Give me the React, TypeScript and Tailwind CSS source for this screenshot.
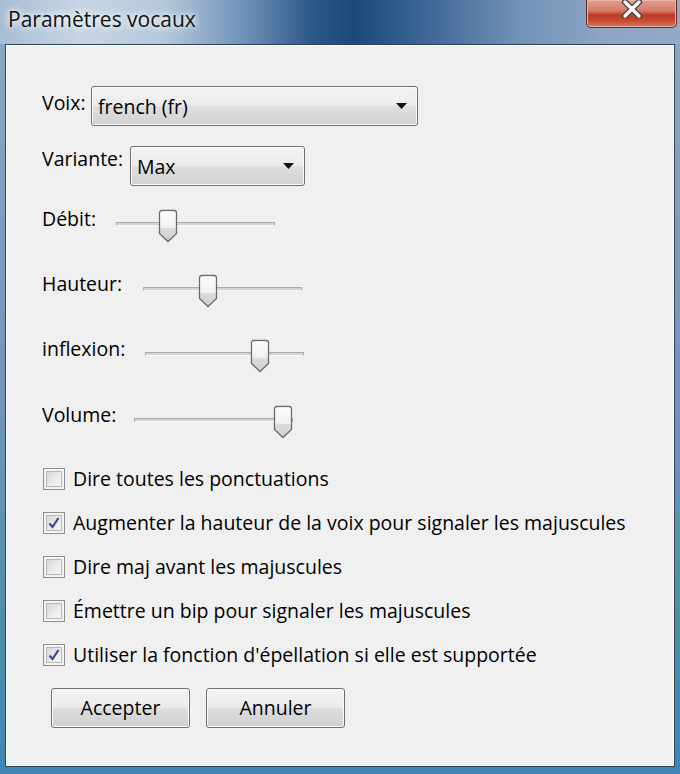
import React from "react";

const font = { fontFamily: '"Open Sans", "Noto Sans", sans-serif' };

function Combo({ value, width }: { value: string; width: string }) {
  return (
    <div
      className={`${width} h-[40px] rounded-[3px] border border-[#707070] bg-[linear-gradient(180deg,#f3f3f3_0%,#ececec_48%,#dedede_52%,#d2d2d2_100%)] shadow-[inset_0_0_0_1px_#fbfbfb] flex items-center justify-between pl-[6px] pr-[10px]`}
    >
      <span className="text-[19.5px] leading-[26px] text-black mt-[2px]">{value}</span>
      <svg width="11" height="6" viewBox="0 0 11 6">
        <path d="M0 0H11L5.5 6Z" fill="#111" />
      </svg>
    </div>
  );
}

function SliderRow({ label, labelWidth, offset }: { label: string; labelWidth: string; offset: number }) {
  return (
    <div className="flex items-start h-[33px]">
      <span className={`${labelWidth} text-[19.5px] leading-[26px] mt-[-3px]`}>{label}</span>
      <div className="relative w-[159px] h-[33px]">
        <div className="absolute left-0 right-0 top-[13px] h-[4px] rounded-[1px] border border-[#a9a9a9] border-b-[#f8f8f8] bg-[#d3d6d6]" />
        <svg className="absolute top-0" style={{ left: offset }} width="20" height="34" viewBox="0 0 20 34">
          <defs>
            <linearGradient id={`g-${label}`} x1="0" y1="0" x2="0" y2="1">
              <stop offset="0" stopColor="#fdfdfd" />
              <stop offset="0.55" stopColor="#f1f1f1" />
              <stop offset="0.58" stopColor="#dcdcdc" />
              <stop offset="1" stopColor="#cfcfcf" />
            </linearGradient>
          </defs>
          <path
            d="M1.5 4Q1.5 1.5 4 1.5H16Q18.5 1.5 18.5 4V24.5L10 32.5L1.5 24.5Z"
            fill={`url(#g-${label})`}
            stroke="#6c6c6c"
            strokeWidth="1.3"
          />
          <path d="M3 4.5Q3 3 4.5 3H15.5Q17 3 17 4.5" fill="none" stroke="#fff" strokeWidth="1" />
        </svg>
      </div>
    </div>
  );
}

function Check({ label, checked }: { label: string; checked?: boolean }) {
  return (
    <div className="flex items-center h-[26px]">
      <div className="ml-[1px] w-[22px] h-[22px] border border-[#8e8f8f] bg-[#f4f4f4] p-[2px]">
        <div className="w-full h-full border border-[#b9b9b9] bg-[linear-gradient(135deg,#d6d6d6_0%,#ececec_60%,#f8f8f8_100%)] flex items-center justify-center">
          {checked && (
            <svg width="12" height="12" viewBox="0 0 12 12">
              <path d="M1.5 6.5L4.5 10L10.5 1" fill="none" stroke="#34499a" strokeWidth="2.2" />
            </svg>
          )}
        </div>
      </div>
      <span className="ml-[8px] text-[19.5px] leading-[26px]">{label}</span>
    </div>
  );
}

function WinButton({ label }: { label: string }) {
  return (
    <button
      type="button"
      className="w-[139px] h-[40px] rounded-[3px] border border-[#707070] bg-[linear-gradient(180deg,#f3f3f3_0%,#ebebeb_48%,#dddddd_52%,#cfcfcf_100%)] shadow-[inset_0_0_0_1px_#fafafa] text-[19.5px] leading-[26px] text-black"
    >
      {label}
    </button>
  );
}

export default function App() {
  return (
    <div
      className="w-[680px] h-[774px] flex flex-col bg-[linear-gradient(180deg,#8ea8c5_0%,#6f93bb_55%,#4f8fa6_80%,#3f86b4_100%)] text-black"
      style={font}
    >
      {/* Title bar */}
      <div className="h-[44px] flex items-start justify-between bg-[linear-gradient(90deg,#a9bdd3_0%,#c7d5e3_12%,#b5c8dc_24%,#6f91b7_36%,#2c5785_46%,#1d4879_52%,#3a6492_62%,#7191b5_76%,#8ba5c3_88%,#93abc7_100%)]">
        <span className="pl-[8px] pt-[5px] text-[21px] leading-[28px] text-[#111] [text-shadow:0_0_10px_#ffffff,0_0_6px_#ffffff]">
          Paramètres vocaux
        </span>
        <div className="mr-[3px] w-[91px] h-[28px] rounded-b-[5px] border border-t-0 border-[#5b2a24] shadow-[inset_0_0_0_1px_#e9b3a6] bg-[linear-gradient(180deg,#e2a191_0%,#d67c68_40%,#bd3c26_55%,#c4472f_75%,#da7a5e_100%)] flex items-start justify-center">
          <svg width="24" height="18" viewBox="0 0 24 18">
            <path d="M5 2L19 16M19 2L5 16" stroke="#3b3b46" strokeWidth="6" strokeLinecap="round" />
            <path d="M5 2L19 16M19 2L5 16" stroke="#ffffff" strokeWidth="3.4" strokeLinecap="round" />
          </svg>
        </div>
      </div>

      {/* Client area */}
      <div className="flex-1 pl-[5px] pr-[5px] pb-[7px] flex">
        <div className="flex-1 border border-[#2f435b] bg-white p-[1px] flex">
          <div className="flex-1 bg-[#f0f0f0] pl-[35px] pt-[40px] flex flex-col">
            <div className="flex items-start">
              <span className="w-[49px] text-[19.5px] leading-[26px] mt-[4px]">Voix:</span>
              <Combo value="french (fr)" width="w-[327px]" />
            </div>
            <div className="flex items-start mt-[20px]">
              <span className="w-[88px] text-[19.5px] leading-[26px]">Variante:</span>
              <Combo value="Max" width="w-[175px]" />
            </div>

            <div className="mt-[23px]">
              <SliderRow label="Débit:" labelWidth="w-[74px]" offset={42} />
            </div>
            <div className="mt-[32px]">
              <SliderRow label="Hauteur:" labelWidth="w-[101px]" offset={55} />
            </div>
            <div className="mt-[32px]">
              <SliderRow label="inflexion:" labelWidth="w-[103px]" offset={105} />
            </div>
            <div className="mt-[33px]">
              <SliderRow label="Volume:" labelWidth="w-[92px]" offset={139} />
            </div>

            <div className="mt-[28px] flex flex-col gap-[18px]">
              <Check label="Dire toutes les ponctuations" />
              <Check label="Augmenter la hauteur de la voix pour signaler les majuscules" checked />
              <Check label="Dire maj avant les majuscules" />
              <Check label="Émettre un bip pour signaler les majuscules" />
              <Check label="Utiliser la fonction d'épellation si elle est supportée" checked />
            </div>

            <div className="mt-[20px] ml-[9px] flex gap-[16px]">
              <WinButton label="Accepter" />
              <WinButton label="Annuler" />
            </div>
          </div>
        </div>
      </div>
    </div>
  );
}
